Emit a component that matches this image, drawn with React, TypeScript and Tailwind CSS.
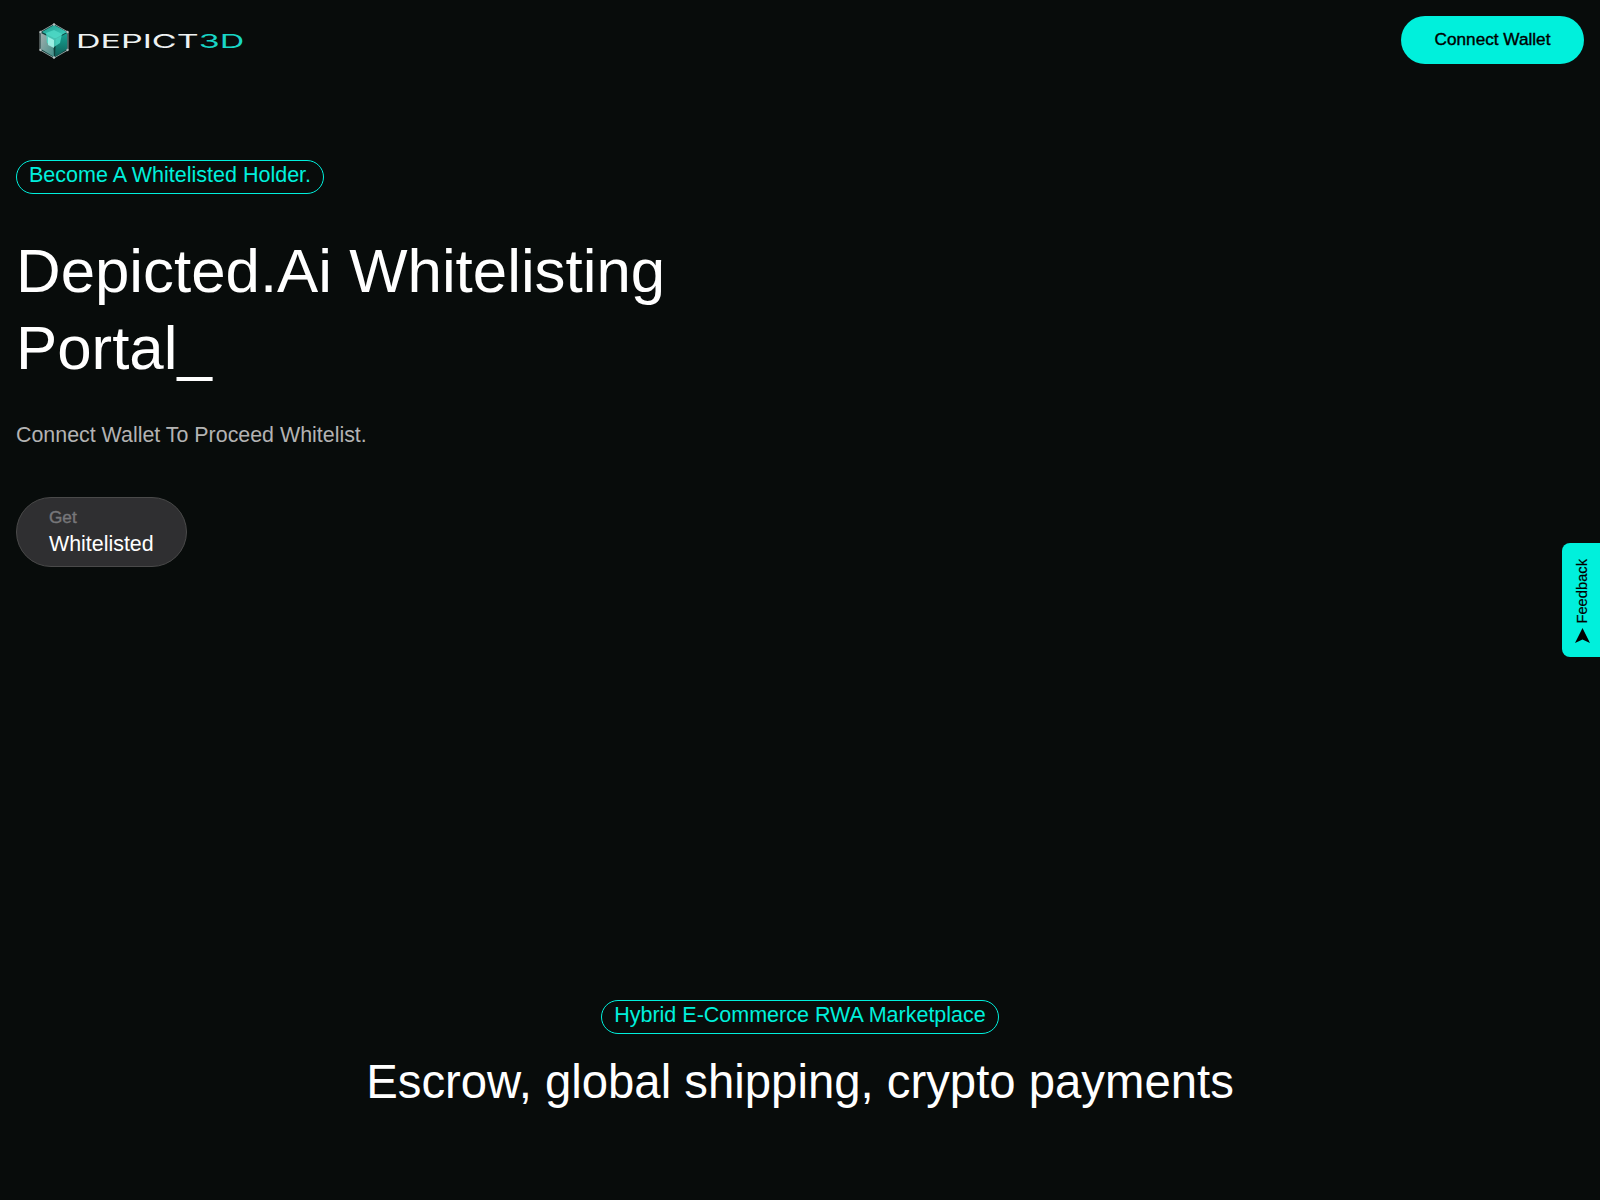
import React from 'react';

const SANS = "font-['Liberation_Sans',Arial,sans-serif]";

// --- LOGO ---
function LogoCube() {
  return (
    <svg width="32" height="36" viewBox="0 0 32 36" fill="none">
      <defs>
        <linearGradient id="cubeTop" x1="0" y1="0" x2="1" y2="1">
          <stop offset="0" stopColor="#1f9c8e" />
          <stop offset="1" stopColor="#43d6c4" />
        </linearGradient>
        <linearGradient id="cubeLeft" x1="0" y1="0" x2="1" y2="1">
          <stop offset="0" stopColor="#a3adad" />
          <stop offset="1" stopColor="#3f8f88" />
        </linearGradient>
        <linearGradient id="cubeRight" x1="0" y1="0" x2="0" y2="1">
          <stop offset="0" stopColor="#17a594" />
          <stop offset="1" stopColor="#0f5f58" />
        </linearGradient>
      </defs>
      <polygon points="16,1 30,9 30,27 16,35 2,27 2,9" fill="#0e3f3c" stroke="#8d9a9a" strokeWidth="1" />
      <polygon points="16,2 29,9 18,15 16,15 4,9" fill="url(#cubeTop)" />
      <polygon points="3,10 15,16 16,34 3,26" fill="url(#cubeLeft)" />
      <polygon points="29,10 29,26 17,34 18,16" fill="url(#cubeRight)" />
      <polygon points="8,10 16,7 24,11 22,20 16,24 9,20" fill="#4fd8c6" opacity="0.85" />
      <polygon points="10,14 16,17 16,25 10,22" fill="#a8f5ea" opacity="0.85" />
      <circle cx="16" cy="1.5" r="1.2" fill="#b8c2c2" />
      <circle cx="2.5" cy="9" r="1.2" fill="#b8c2c2" />
      <circle cx="29.5" cy="9" r="1.2" fill="#b8c2c2" />
      <circle cx="2.5" cy="27" r="1.2" fill="#b8c2c2" />
      <circle cx="29.5" cy="27" r="1.2" fill="#b8c2c2" />
      <circle cx="16" cy="34.5" r="1.2" fill="#b8c2c2" />
    </svg>
  );
}

function Logo() {
  return (
    <div className="flex items-center gap-[6px] mt-[2px]">
      <LogoCube />
      <div className="w-[168px] h-[20px] flex items-center">
        <span className="inline-block origin-left scale-x-[1.79] font-['Inter',sans-serif] text-[19px] leading-none whitespace-nowrap font-normal text-[#eef2f2]">
          DEPICT<span className="text-[#19d6c6]">3D</span>
        </span>
      </div>
    </div>
  );
}

function Tag({ children }: { children: React.ReactNode }) {
  return (
    <div className="inline-block rounded-full border border-[#00f0dc] px-3 h-[34px] leading-[29px] text-[21.5px] text-[#00f0dc]">
      {children}
    </div>
  );
}

function FeedbackTab() {
  return (
    <div className="absolute right-0 top-[543px] w-[38px] h-[114px] bg-[#00f0dc] rounded-l-lg flex flex-col items-center justify-center gap-[5px] pl-[2px] pt-[2px] text-black">
      <span className="[writing-mode:vertical-rl] rotate-180 text-[14.7px] leading-none [-webkit-text-stroke:0.2px_black]">Feedback</span>
      <svg width="15" height="15" viewBox="0 0 15 15" fill="currentColor">
        <path d="M7.5 0 L15 15 L7.5 11.5 L0 15 Z" />
      </svg>
    </div>
  );
}

// --- MAIN PAGE COMPONENT ---
export default function App() {
  return (
    <div className={`${SANS} relative h-[1200px] overflow-hidden bg-[#080c0b] text-white`}>
      {/* Header */}
      <header className="h-[80px] pl-[38px] pr-4 flex items-center justify-between">
        <Logo />
        <button className="w-[183px] h-[48px] rounded-full bg-[#00f0dc] text-black text-[17.2px] [-webkit-text-stroke:0.4px_black]">
          Connect Wallet
        </button>
      </header>

      {/* Hero */}
      <section className="px-4 pt-[80px]">
        <Tag>Become A Whitelisted Holder.</Tag>
        <h1 className="mt-[38px] text-[61.8px] leading-[77px] font-normal">
          Depicted.Ai Whitelisting
          <br />
          Portal_
        </h1>
        <p className="mt-[35px] text-[21.4px] leading-[28px] text-[#b3b3b3]">Connect Wallet To Proceed Whitelist.</p>
        <button className="mt-[48px] block w-[171px] h-[70px] rounded-full bg-[#2f2f31] border border-[#4a4a4a] pl-8 text-left">
          <span className="block text-[17.2px] leading-[20px] text-[#77777a] [-webkit-text-stroke:0.4px_#77777a]">Get</span>
          <span className="block mt-[3px] text-[21.4px] leading-[28px] text-white">Whitelisted</span>
        </button>
      </section>

      {/* Marketplace */}
      <section className="mt-[433px] flex flex-col items-center">
        <Tag>Hybrid E-Commerce RWA Marketplace</Tag>
        <h2 className="mt-[16px] text-[47.3px] leading-[64px] font-normal">Escrow, global shipping, crypto payments</h2>
      </section>

      <FeedbackTab />
    </div>
  );
}
